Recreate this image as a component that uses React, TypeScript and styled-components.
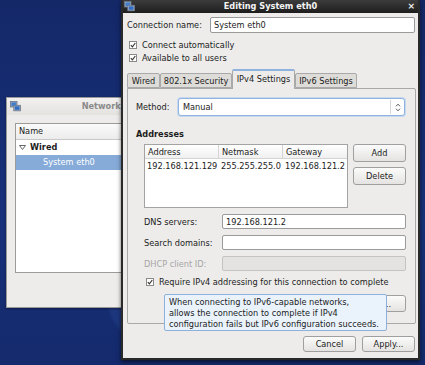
import React from "react";
import styled, { createGlobalStyle } from "styled-components";

const Global = createGlobalStyle`
  html, body { margin: 0; padding: 0; }
  body { font-family: "DejaVu Sans", "Liberation Sans", sans-serif; font-size: 8.2px; color: #1c1c1c; }
  * { box-sizing: border-box; }
`;

const Desktop = styled.div`
  position: relative;
  width: 425px;
  height: 365px;
  overflow: hidden;
  background:
    radial-gradient(circle at 45px 130px, rgba(60, 95, 175, 0.35) 0, rgba(60, 95, 175, 0.25) 30px, transparent 34px),
    radial-gradient(circle at 150px 300px, rgba(60, 95, 175, 0.3) 0, rgba(60, 95, 175, 0.2) 40px, transparent 44px),
    linear-gradient(180deg, #142868 0%, #17307a 60%, #142a6c 100%);
`;

/* ---------- background window ---------- */
const BgWindow = styled.div`
  position: absolute;
  left: 6px;
  top: 97px;
  width: 250px;
  height: 211px;
  background: #edeceb;
  border: 1px solid #9a9a9a;
  display: flex;
  flex-direction: column;
  box-shadow: 0 1px 2px rgba(0, 0, 0, 0.4);
`;

const BgTitle = styled.div`
  height: 17px;
  display: flex;
  align-items: center;
  padding-left: 3px;
  position: relative;
  background: linear-gradient(#f2f1f0, #e4e2df);
`;

const BgTitleText = styled.div`
  position: absolute;
  left: 0;
  right: 0;
  text-align: center;
  font-weight: bold;
  color: #8a8a8a;
  line-height: 17px;
`;

const ListBox = styled.div`
  margin: 8px 0 0 8px;
  height: 150px;
  background: #fff;
  border: 1px solid #9b9b9b;
  display: flex;
  flex-direction: column;
`;

const ListHeader = styled.div`
  height: 16px;
  line-height: 15px;
  padding-left: 3px;
  background: linear-gradient(#fafafa, #ececec);
  border-bottom: 1px solid #c8c8c8;
`;

const ListRow = styled.div<{ $selected?: boolean; $indent: number; $bold?: boolean }>`
  height: 15px;
  line-height: 15px;
  display: flex;
  align-items: center;
  gap: 4px;
  padding-left: ${(p) => p.$indent}px;
  font-weight: ${(p) => (p.$bold ? "bold" : "normal")};
  background: ${(p) => (p.$selected ? "#86abd9" : "transparent")};
  color: ${(p) => (p.$selected ? "#fff" : "#1c1c1c")};
`;

/* ---------- dialog ---------- */
const Dialog = styled.div`
  position: absolute;
  left: 121px;
  top: 0;
  width: 299px;
  height: 360px;
  background: #2a2a2a;
  padding: 0 2px 2px 2px;
  display: flex;
  flex-direction: column;
  box-shadow: 0 2px 4px rgba(0, 0, 0, 0.6);
`;

const TitleBar = styled.div`
  height: 13px;
  display: flex;
  align-items: center;
  position: relative;
  background: linear-gradient(#3c3c3c, #1d1d1d);
  padding-left: 1px;
`;

const TitleText = styled.div`
  position: absolute;
  left: 0;
  right: 0;
  text-align: center;
  color: #f4f4f4;
  font-weight: bold;
  line-height: 13px;
  font-size: 8.2px;
`;

const CloseX = styled.div`
  position: absolute;
  right: 3px;
  top: 0;
  color: #eee;
  font-size: 9px;
  line-height: 12px;
  font-weight: bold;
`;

const Body = styled.div`
  flex: 1;
  background: #edeceb;
  padding: 4px 3px 0 4px;
  display: flex;
  flex-direction: column;
  position: relative;
`;

const Row = styled.div<{ $mt?: number; $ml?: number; $h?: number }>`
  display: flex;
  align-items: center;
  margin-top: ${(p) => p.$mt ?? 0}px;
  margin-left: ${(p) => p.$ml ?? 0}px;
  height: ${(p) => (p.$h ? `${p.$h}px` : "auto")};
`;

const Label = styled.span<{ $w?: number; $disabled?: boolean; $bold?: boolean }>`
  width: ${(p) => (p.$w ? `${p.$w}px` : "auto")};
  flex-shrink: 0;
  white-space: nowrap;
  color: ${(p) => (p.$disabled ? "#a6a6a6" : "#1c1c1c")};
  font-weight: ${(p) => (p.$bold ? "bold" : "normal")};
`;

const TextInput = styled.div<{ $w?: number; $disabled?: boolean; $h?: number }>`
  width: ${(p) => (p.$w ? `${p.$w}px` : "auto")};
  flex: ${(p) => (p.$w ? "none" : "1")};
  height: ${(p) => p.$h ?? 15}px;
  background: ${(p) => (p.$disabled ? "#e4e3e1" : "#fff")};
  border: 1px solid ${(p) => (p.$disabled ? "#c4c3c1" : "#9a9a9a")};
  border-radius: 2px;
  padding-left: 3px;
  display: flex;
  align-items: center;
  white-space: nowrap;
`;

const CheckBoxBox = styled.span`
  width: 8px;
  height: 8px;
  border: 1px solid #8a8a8a;
  background: #fff;
  display: inline-flex;
  align-items: center;
  justify-content: center;
  margin-right: 5px;
  flex-shrink: 0;
`;

const CheckRow = styled.div<{ $mt: number; $ml: number }>`
  display: flex;
  align-items: center;
  height: 13px;
  margin-top: ${(p) => p.$mt}px;
  margin-left: ${(p) => p.$ml}px;
`;

const TabStrip = styled.div`
  display: flex;
  align-items: flex-end;
  height: 19px;
  margin-top: 5px;
`;

const Tab = styled.div<{ $active?: boolean; $w: number }>`
  width: ${(p) => p.$w}px;
  height: ${(p) => (p.$active ? 20 : 15)}px;
  margin-bottom: ${(p) => (p.$active ? -1 : 0)}px;
  display: flex;
  align-items: center;
  justify-content: center;
  white-space: nowrap;
  background: ${(p) => (p.$active ? "#edeceb" : "#dedcd8")};
  border: 1px solid #a9a9a9;
  border-bottom: ${(p) => (p.$active ? "none" : "1px solid #a9a9a9")};
  border-top: ${(p) => (p.$active ? "2px solid #8fb3de" : "1px solid #a9a9a9")};
  border-radius: 2px 2px 0 0;
  position: relative;
  z-index: ${(p) => (p.$active ? 1 : 0)};
  padding-bottom: ${(p) => (p.$active ? 2 : 0)}px;
`;

const Panel = styled.div`
  height: 236px;
  width: 289px;
  border: 1px solid #a9a9a9;
  border-radius: 0 2px 2px 2px;
  padding: 9px 9px 0 8px;
  display: flex;
  flex-direction: column;
`;

const Select = styled.div`
  width: 227px;
  height: 18px;
  background: #fff;
  border: 1px solid #8fb3de;
  border-radius: 3px;
  box-shadow: 0 0 0 1px #c6d9ef;
  display: flex;
  align-items: center;
  padding-left: 4px;
  position: relative;
`;

const SelectArrow = styled.div`
  position: absolute;
  right: 0;
  top: 1px;
  bottom: 1px;
  width: 14px;
  border-left: 1px solid #d7d7d7;
  display: flex;
  align-items: center;
  justify-content: center;
`;

const AddrBlock = styled.div`
  display: flex;
  gap: 5px;
  margin: 4px 0 0 8px;
`;

const Table = styled.div`
  width: 204px;
  height: 64px;
  background: #fff;
  border: 1px solid #a3a3a3;
  display: grid;
  grid-template-columns: 74px 64px 1fr;
  grid-template-rows: 14px 15px 1fr;
`;

const HeadCell = styled.div<{ $last?: boolean }>`
  padding-left: 3px;
  line-height: 14px;
  border-bottom: 1px solid #d4d4d4;
  border-right: ${(p) => (p.$last ? "none" : "1px solid #d4d4d4")};
  background: linear-gradient(#ffffff, #f0f0f0);
  white-space: nowrap;
`;

const Cell = styled.div`
  padding-left: 2px;
  line-height: 15px;
  white-space: nowrap;
`;

const ButtonCol = styled.div`
  display: flex;
  flex-direction: column;
  gap: 5px;
  width: 53px;
`;

const Button = styled.div<{ $w?: number; $h?: number }>`
  width: ${(p) => (p.$w ? `${p.$w}px` : "100%")};
  height: ${(p) => p.$h ?? 18}px;
  border: 1px solid #9f9f9f;
  border-radius: 3px;
  background: linear-gradient(#fbfbfb, #e4e3e1);
  display: flex;
  align-items: center;
  justify-content: center;
  white-space: nowrap;
  flex-shrink: 0;
`;

const FieldGrid = styled.div`
  display: grid;
  grid-template-columns: 78px 184px;
  grid-auto-rows: 15px;
  row-gap: 6px;
  align-items: center;
  margin: 6px 0 0 8px;
`;

const Footer = styled.div`
  display: flex;
  justify-content: flex-end;
  gap: 6px;
  margin-top: 12px;
`;

const Tooltip = styled.div`
  position: absolute;
  left: 41px;
  top: 281px;
  width: 223px;
  height: 37px;
  background: #eaf3fc;
  border: 1px solid #8db1dc;
  border-radius: 2px;
  padding: 2px 4px;
  line-height: 11px;
  color: #1c1c1c;
  white-space: nowrap;
`;

const NetIcon = () => (
  <svg width="11" height="11" viewBox="0 0 11 11">
    <rect x="0.5" y="0.5" width="6.5" height="5.5" fill="#9aa7b8" stroke="#6a7587" strokeWidth="0.8" />
    <rect x="1.5" y="1.5" width="4.5" height="3.5" fill="#3f7fd0" />
    <rect x="3.8" y="4.3" width="6.7" height="5.5" fill="#a8b4c4" stroke="#6a7587" strokeWidth="0.8" />
    <rect x="4.8" y="5.3" width="4.7" height="3.5" fill="#2f6ec4" />
  </svg>
);

const Check = () => (
  <CheckBoxBox>
    <svg width="6" height="6" viewBox="0 0 6 6">
      <path d="M0.8 3.1 L2.4 4.8 L5.3 1" fill="none" stroke="#333" strokeWidth="1.1" />
    </svg>
  </CheckBoxBox>
);

const Expander = () => (
  <svg width="7" height="5" viewBox="0 0 7 5">
    <path d="M0.5 0.5 L6.5 0.5 L3.5 4.5 Z" fill="none" stroke="#555" strokeWidth="0.9" />
  </svg>
);

export default function App() {
  return (
    <Desktop>
      <Global />
      <BgWindow>
        <BgTitle>
          <NetIcon />
          <BgTitleText>Network Connections</BgTitleText>
        </BgTitle>
        <ListBox>
          <ListHeader>Name</ListHeader>
          <ListRow $indent={3} $bold>
            <Expander />
            Wired
          </ListRow>
          <ListRow $indent={27} $selected>
            System eth0
          </ListRow>
        </ListBox>
      </BgWindow>

      <Dialog>
        <TitleBar>
          <NetIcon />
          <TitleText>Editing System eth0</TitleText>
          <CloseX>×</CloseX>
        </TitleBar>
        <Body>
          <Row $h={16}>
            <Label $w={83}>Connection name:</Label>
            <TextInput $h={16} $w={205}>System eth0</TextInput>
          </Row>
          <CheckRow $mt={5} $ml={2}>
            <Check />
            Connect automatically
          </CheckRow>
          <CheckRow $mt={0} $ml={2}>
            <Check />
            Available to all users
          </CheckRow>
          <TabStrip>
            <Tab $w={33}>Wired</Tab>
            <Tab $w={72}>802.1x Security</Tab>
            <Tab $w={63} $active>IPv4 Settings</Tab>
            <Tab $w={62}>IPv6 Settings</Tab>
          </TabStrip>
          <Panel>
            <Row $h={18}>
              <Label $w={42}>Method:</Label>
              <Select>
                Manual
                <SelectArrow>
                  <svg width="6" height="9" viewBox="0 0 6 9">
                    <path d="M1 3.3 L3 1.2 L5 3.3 M1 5.7 L3 7.8 L5 5.7" fill="none" stroke="#444" strokeWidth="0.9" />
                  </svg>
                </SelectArrow>
              </Select>
            </Row>
            <Row $mt={12} $h={12}>
              <Label $bold>Addresses</Label>
            </Row>
            <AddrBlock>
              <Table>
                <HeadCell>Address</HeadCell>
                <HeadCell>Netmask</HeadCell>
                <HeadCell $last>Gateway</HeadCell>
                <Cell>192.168.121.129</Cell>
                <Cell>255.255.255.0</Cell>
                <Cell>192.168.121.2</Cell>
              </Table>
              <ButtonCol>
                <Button>Add</Button>
                <Button>Delete</Button>
              </ButtonCol>
            </AddrBlock>
            <FieldGrid>
              <Label>DNS servers:</Label>
              <TextInput>192.168.121.2</TextInput>
              <Label>Search domains:</Label>
              <TextInput />
              <Label $disabled>DHCP client ID:</Label>
              <TextInput $disabled />
            </FieldGrid>
            <CheckRow $mt={4} $ml={10}>
              <Check />
              Require IPv4 addressing for this connection to complete
            </CheckRow>
            <Row $mt={7} style={{ justifyContent: "flex-end" }}>
              <Button $w={66} $h={17}>Routes…</Button>
            </Row>
          </Panel>
          <Footer>
            <Button $w={53} $h={16}>Cancel</Button>
            <Button $w={53} $h={16}>Apply...</Button>
          </Footer>
          <Tooltip>
            When connecting to IPv6-capable networks,
            <br />
            allows the connection to complete if IPv4
            <br />
            configuration fails but IPv6 configuration succeeds.
          </Tooltip>
        </Body>
      </Dialog>
    </Desktop>
  );
}
